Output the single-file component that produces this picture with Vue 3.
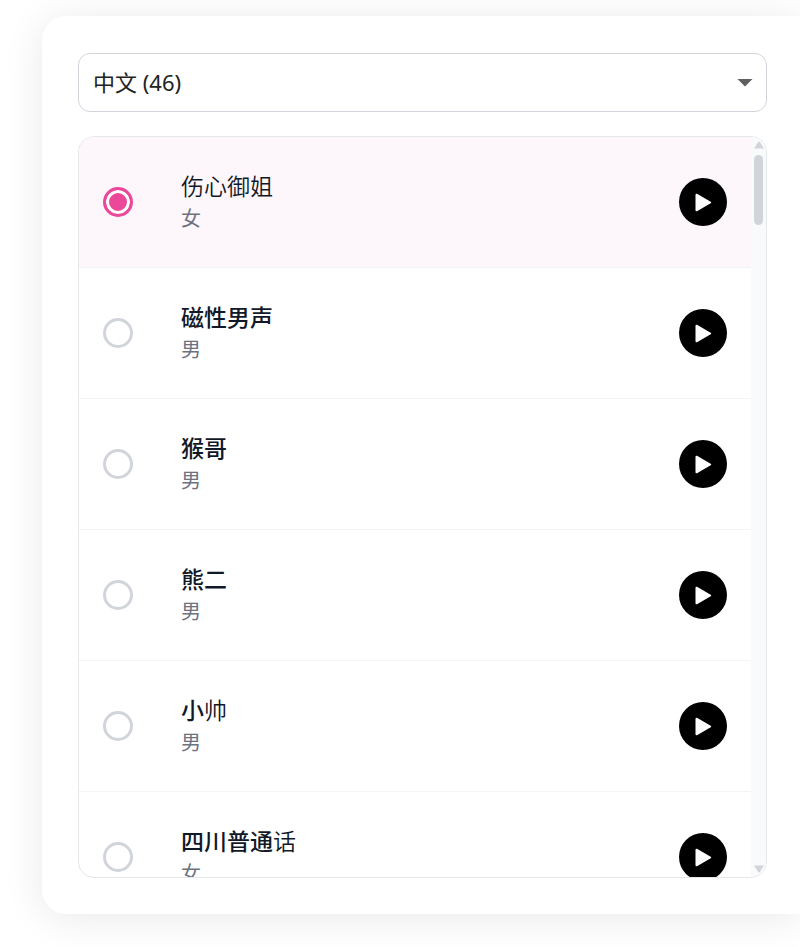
<template>
    <main class="page">
        <section class="card">
            <div class="select-wrapper">
                <select v-model="language" class="language" aria-label="语言">
                    <option value="zh">中文 (46)</option>
                </select>
                <svg class="caret" viewBox="0 0 16 8" aria-hidden="true">
                    <path d="M0.5 0h15L8 7.6z" />
                </svg>
            </div>
            <div class="voice-box">
                <ul class="voices">
                    <li v-for="voice in voices" :key="voice.id" class="voice" :class="{ active: voice.id === selected }">
                        <input :id="voice.id" v-model="selected" class="radio" type="radio" name="voice" :value="voice.id" />
                        <label class="info" :for="voice.id">
                            <span class="name">{{ voice.name }}<span class="thin">{{ voice.thin }}</span></span>
                            <span class="gender">{{ voice.gender }}</span>
                        </label>
                        <button class="play" type="button" aria-label="播放">
                            <svg viewBox="0 0 48 48" aria-hidden="true">
                                <path d="M17.500 16.700v15.600L31.200 24.500z" />
                            </svg>
                        </button>
                    </li>
                </ul>
                <div class="scrollbar" aria-hidden="true">
                    <svg class="arrow" viewBox="0 0 10 8"><path d="M4.300 0.800h1.400L10 7.500H0z" /></svg>
                    <div class="track"><div class="thumb"></div></div>
                    <svg class="arrow" viewBox="0 0 10 8"><path d="M0 0.500h10L5.700 7.200H4.300z" /></svg>
                </div>
            </div>
        </section>
    </main>
</template>

<script setup>
import { ref } from 'vue';

const language = ref('zh');
const selected = ref('voice-1');

// thin: trailing characters drawn in the lighter weight
const voices = [
    { id: 'voice-1', name: '', thin: '伤心御姐', gender: '女' },
    { id: 'voice-2', name: '磁性男声', thin: '', gender: '男' },
    { id: 'voice-3', name: '猴哥', thin: '', gender: '男' },
    { id: 'voice-4', name: '熊二', thin: '', gender: '男' },
    { id: 'voice-5', name: '小', thin: '帅', gender: '男' },
    { id: 'voice-6', name: '四川普通', thin: '话', gender: '女' },
];
</script>

<style>
body {
    margin: 0;
    background: #fff;
}
</style>

<style scoped>
.page {
    display: flex;
    box-sizing: border-box;
    height: 100vh;
    padding: 16px 0 33px 42px;
    overflow: hidden;
    font-family: "Noto Sans", "Noto Sans CJK SC", sans-serif;
    color: #111827;
}

.card {
    display: flex;
    flex: 1;
    flex-direction: column;
    gap: 24px;
    min-width: 0;
    padding: 37px 33px 36px 36px;
    border-radius: 24px 0 0 24px;
    background: #fff;
    box-shadow: 0 4px 40px rgba(0, 0, 0, 0.09);
}

.select-wrapper {
    position: relative;
}

.language {
    display: block;
    box-sizing: border-box;
    width: 100%;
    height: 59px;
    padding: 0 48px 2px 14px;
    border: 1px solid #d1d5db;
    border-radius: 12px;
    background: #fff;
    color: #222;
    font-family: inherit;
    font-size: 22px;
    appearance: none;
}

.caret {
    position: absolute;
    top: 26px;
    right: 14px;
    width: 16px;
    height: 8px;
    fill: #5f5f5f;
    pointer-events: none;
}

.voice-box {
    display: flex;
    flex: 1;
    min-height: 0;
    border: 1px solid #e5e7eb;
    border-radius: 16px;
    overflow: hidden;
}

.voices {
    flex: 1;
    margin: 0;
    padding: 0;
    list-style: none;
    overflow: hidden;
}

.voice {
    display: flex;
    align-items: center;
    padding: 33px 24px;
    border-bottom: 1px solid #f3f4f6;
}

.voice.active {
    background: #fdf6fb;
}

.radio {
    flex: none;
    box-sizing: border-box;
    width: 30px;
    height: 30px;
    margin: 0 48px 0 0;
    border: 3px solid #d1d5db;
    border-radius: 50%;
    background: #fff;
    appearance: none;
}

.radio:checked {
    border-color: #ec4899;
    background: #ec4899;
    box-shadow: inset 0 0 0 3px #fff;
}

.info {
    display: flex;
    flex: 1;
    flex-direction: column;
    gap: 2px;
}

.name {
    font-size: 23px;
    font-weight: 500;
    line-height: 32px;
}

.thin {
    font-weight: 350;
}

.gender {
    color: #6b7280;
    font-size: 20px;
    line-height: 30px;
}

.play {
    flex: none;
    width: 48px;
    height: 48px;
    padding: 0;
    border: 0;
    border-radius: 50%;
    background: #000;
    cursor: pointer;
}

.play svg {
    display: block;
    fill: #fff;
    stroke: #fff;
    stroke-width: 2;
    stroke-linejoin: round;
}

.scrollbar {
    display: flex;
    flex-direction: column;
    align-items: center;
    gap: 6px;
    box-sizing: border-box;
    width: 15px;
    padding: 4px 0;
    background: #f9fafb;
}

.arrow {
    width: 10px;
    height: 8px;
    fill: #d1d5db;
}

.track {
    flex: 1;
}

.thumb {
    width: 9px;
    height: 70px;
    border-radius: 5px;
    background: #d1d5db;
}
</style>
